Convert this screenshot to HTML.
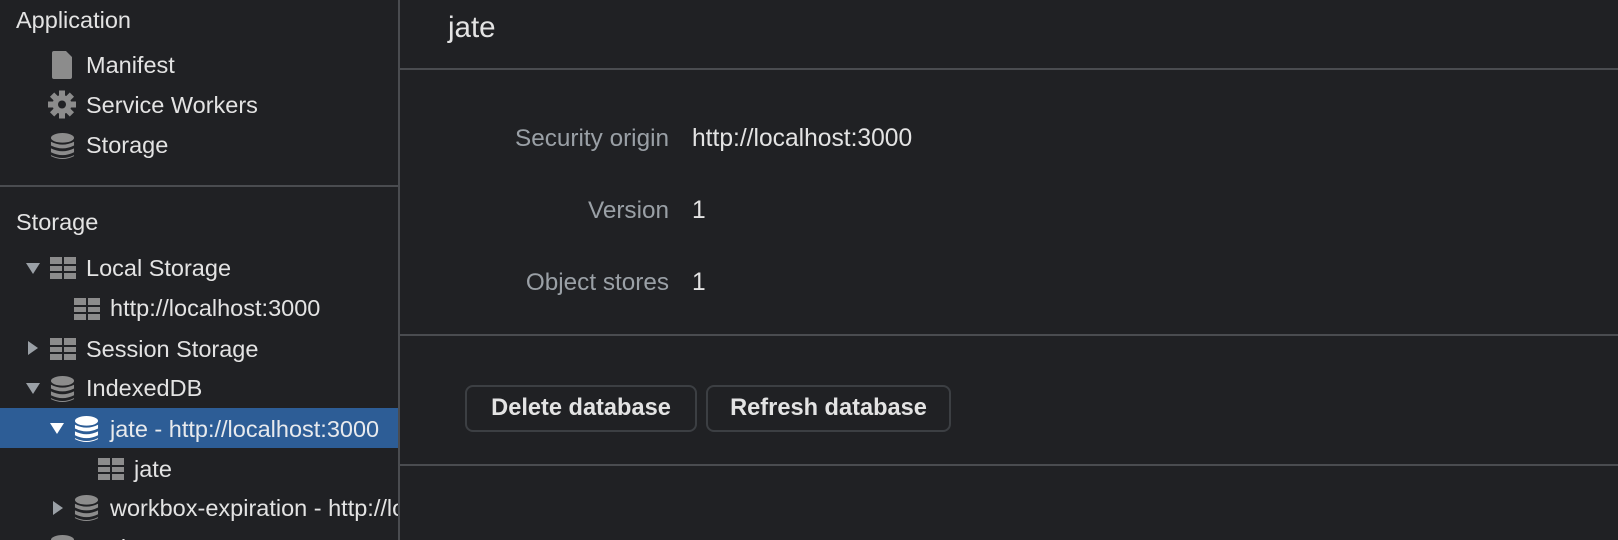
<!DOCTYPE html>
<html><head><style>
body{margin:0;width:1618px;height:540px;background:#202124;font-family:"Liberation Sans",sans-serif;color:#e3e3e3;overflow:hidden;position:relative}
.side{position:absolute;left:0;top:0;width:398px;height:540px;border-right:2px solid #4a4c50;overflow:hidden}
.t{position:absolute;font-size:23.5px;white-space:nowrap;line-height:26px}
.ic{position:absolute}
.hl{position:absolute;left:0;top:408px;width:398px;height:40px;background:#2d5d96}
.hr{position:absolute;height:2px;background:#4a4c50}
.lab{position:absolute;font-size:24.3px;color:#9aa0a6;right:949px;text-align:right;white-space:nowrap;line-height:26px}
.val{position:absolute;font-size:24.6px;left:692px;color:#e3e3e3;line-height:26px}
.btn{position:absolute;top:385px;height:47px;border:2px solid #3c3f43;border-radius:8px;font-weight:bold;font-size:23.6px;line-height:43px;text-align:center;color:#e3e3e3;box-sizing:border-box}
</style></head><body>
<div class="side">
<div class="t" style="left:16px;top:7px">Application</div>
<svg class="ic" style="left:51px;top:51px" width="22" height="28" viewBox="0 0 22 28"><path d="M2 0H15L21 6V26Q21 28 19 28H3Q1 28 1 26V2Q1 0 3 0Z" fill="#8c8c8c"/></svg>
<div class="t" style="left:86px;top:52px">Manifest</div>
<svg class="ic" style="left:48px;top:90px" width="28" height="29" viewBox="-14 -14 28 28"><g fill="#8c8c8c"><circle r="9.5"/><rect x="-3" y="-14" width="6" height="28"/><rect x="-3" y="-14" width="6" height="28" transform="rotate(45)"/><rect x="-3" y="-14" width="6" height="28" transform="rotate(90)"/><rect x="-3" y="-14" width="6" height="28" transform="rotate(135)"/></g><circle r="4" fill="#202124"/></svg>
<div class="t" style="left:86px;top:92px">Service Workers</div>
<svg class="ic" style="left:50px;top:133px" width="25" height="27" viewBox="0 0 26 28"><g fill="#8c8c8c"><ellipse cx="13" cy="5" rx="12" ry="5"/><path d="M1 9Q13 15 25 9V13Q13 19 1 13Z"/><path d="M1 16Q13 22 25 16V20Q13 26 1 20Z"/><path d="M1 23Q13 29 25 23V24Q13 30 1 24Z"/></g></svg>
<div class="t" style="left:86px;top:132px">Storage</div>
<div class="hr" style="left:0;top:185px;width:398px"></div>
<div class="t" style="left:16px;top:209px">Storage</div>
<svg class="ic" style="left:26px;top:263px" width="14" height="12"><path d="M0 0H14L7 11Z" fill="#9aa0a6"/></svg>
<svg class="ic" style="left:50px;top:257px" width="26" height="23"><g fill="#8c8c8c"><rect x="0" y="0" width="12" height="7"/><rect x="14" y="0" width="12" height="7"/><rect x="0" y="9" width="12" height="5"/><rect x="14" y="9" width="12" height="5"/><rect x="0" y="16" width="12" height="6"/><rect x="14" y="16" width="12" height="6"/></g></svg>
<div class="t" style="left:86px;top:255px">Local Storage</div>
<svg class="ic" style="left:74px;top:298px" width="26" height="23"><g fill="#8c8c8c"><rect x="0" y="0" width="12" height="7"/><rect x="14" y="0" width="12" height="7"/><rect x="0" y="9" width="12" height="5"/><rect x="14" y="9" width="12" height="5"/><rect x="0" y="16" width="12" height="6"/><rect x="14" y="16" width="12" height="6"/></g></svg>
<div class="t" style="left:110px;top:295px">http://localhost:3000</div>
<svg class="ic" style="left:28px;top:341px" width="12" height="15"><path d="M0 0V14L10 7Z" fill="#9aa0a6"/></svg>
<svg class="ic" style="left:50px;top:338px" width="26" height="23"><g fill="#8c8c8c"><rect x="0" y="0" width="12" height="7"/><rect x="14" y="0" width="12" height="7"/><rect x="0" y="9" width="12" height="5"/><rect x="14" y="9" width="12" height="5"/><rect x="0" y="16" width="12" height="6"/><rect x="14" y="16" width="12" height="6"/></g></svg>
<div class="t" style="left:86px;top:336px">Session Storage</div>
<svg class="ic" style="left:26px;top:383px" width="14" height="12"><path d="M0 0H14L7 11Z" fill="#9aa0a6"/></svg>
<svg class="ic" style="left:50px;top:376px" width="25" height="27" viewBox="0 0 26 28"><g fill="#8c8c8c"><ellipse cx="13" cy="5" rx="12" ry="5"/><path d="M1 9Q13 15 25 9V13Q13 19 1 13Z"/><path d="M1 16Q13 22 25 16V20Q13 26 1 20Z"/><path d="M1 23Q13 29 25 23V24Q13 30 1 24Z"/></g></svg>
<div class="t" style="left:86px;top:375px">IndexedDB</div>
<div class="hl"></div>
<svg class="ic" style="left:50px;top:423px" width="14" height="12"><path d="M0 0H14L7 11Z" fill="#ffffff"/></svg>
<svg class="ic" style="left:74px;top:416px" width="25" height="27" viewBox="0 0 26 28"><g fill="#ffffff"><ellipse cx="13" cy="5" rx="12" ry="5"/><path d="M1 9Q13 15 25 9V13Q13 19 1 13Z"/><path d="M1 16Q13 22 25 16V20Q13 26 1 20Z"/><path d="M1 23Q13 29 25 23V24Q13 30 1 24Z"/></g></svg>
<div class="t" style="left:110px;top:416px;color:#e8eaed">jate - http://localhost:3000</div>
<svg class="ic" style="left:98px;top:458px" width="26" height="23"><g fill="#8c8c8c"><rect x="0" y="0" width="12" height="7"/><rect x="14" y="0" width="12" height="7"/><rect x="0" y="9" width="12" height="5"/><rect x="14" y="9" width="12" height="5"/><rect x="0" y="16" width="12" height="6"/><rect x="14" y="16" width="12" height="6"/></g></svg>
<div class="t" style="left:134px;top:456px">jate</div>
<svg class="ic" style="left:53px;top:501px" width="12" height="15"><path d="M0 0V14L10 7Z" fill="#9aa0a6"/></svg>
<svg class="ic" style="left:74px;top:495px" width="25" height="27" viewBox="0 0 26 28"><g fill="#8c8c8c"><ellipse cx="13" cy="5" rx="12" ry="5"/><path d="M1 9Q13 15 25 9V13Q13 19 1 13Z"/><path d="M1 16Q13 22 25 16V20Q13 26 1 20Z"/><path d="M1 23Q13 29 25 23V24Q13 30 1 24Z"/></g></svg>
<div class="t" style="left:110px;top:495px">workbox-expiration - http://localhost:3000</div>
<svg class="ic" style="left:50px;top:535px" width="25" height="27" viewBox="0 0 26 28"><g fill="#8c8c8c"><ellipse cx="13" cy="5" rx="12" ry="5"/></g></svg>
<div class="t" style="left:86px;top:535px">Web SQL</div>
</div>
<div class="t" style="left:448px;top:12px;font-size:29.5px;line-height:32px">jate</div>
<div class="hr" style="left:400px;top:68px;width:1218px"></div>
<div class="lab" style="top:126px">Security origin</div><div class="val" style="top:126px">http://localhost:3000</div>
<div class="lab" style="top:198px">Version</div><div class="val" style="top:198px">1</div>
<div class="lab" style="top:270px">Object stores</div><div class="val" style="top:270px">1</div>
<div class="hr" style="left:400px;top:334px;width:1218px"></div>
<div class="btn" style="left:465px;width:232px">Delete database</div>
<div class="btn" style="left:706px;width:245px">Refresh database</div>
<div class="hr" style="left:400px;top:464px;width:1218px"></div>
</body></html>
